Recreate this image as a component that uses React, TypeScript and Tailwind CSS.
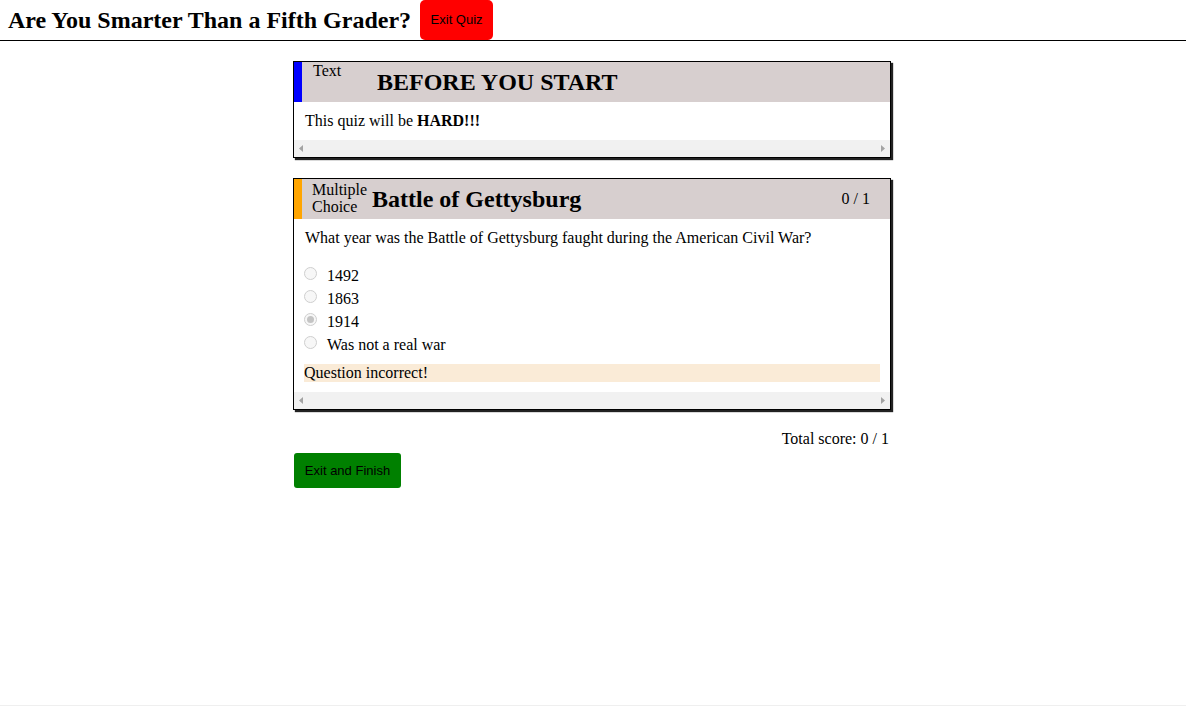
export default function App() {
  const serif = "font-['Liberation_Serif','Times_New_Roman',serif]";
  const sans = "font-['Liberation_Sans',Arial,sans-serif]";

  const options = ["1492", "1863", "1914", "Was not a real war"];
  const selected = "1914";

  function ScrollBar() {
    return (
      <div className="flex h-[17px] items-center justify-between bg-[#f1f1f1] px-[5px]">
        <svg width="4" height="7" viewBox="0 0 4 7">
          <path d="M4 0 L0 3.5 L4 7 Z" fill="#a3a3a3" />
        </svg>
        <svg width="4" height="7" viewBox="0 0 4 7">
          <path d="M0 0 L4 3.5 L0 7 Z" fill="#a3a3a3" />
        </svg>
      </div>
    );
  }

  return (
    <div className={`flex min-h-[706px] flex-col border-b border-[#efefef] bg-white text-black ${serif}`}>
      <header className="flex h-[41px] items-center border-b border-black">
        <h1 className="pl-2 text-2xl font-bold">Are You Smarter Than a Fifth Grader?</h1>
        <button className={`ml-[9px] h-10 w-[73px] self-start rounded-[5px] bg-[#ff0000] text-[13px] ${sans}`}>
          Exit Quiz
        </button>
      </header>

      <main className="mx-auto mt-5 w-[600px] pr-[2px]">
        <div className="border border-black shadow-[2px_2px_1px_#222]">
          <div className="flex h-10 bg-[#d7cfcf]">
            <div className="w-2 bg-[#0000ff]" />
            <span className="ml-[11px] w-[50px] text-base leading-[18px]">Text</span>
            <h2 className="ml-[14px] self-center text-2xl font-bold">BEFORE YOU START</h2>
          </div>
          <div className="py-[10px] pl-[11px] pr-[10px] text-base leading-[18px]">
            This quiz will be <b>HARD!!!</b>
          </div>
          <ScrollBar />
        </div>

        <div className="mt-5 border border-black shadow-[2px_2px_1px_#222]">
          <div className="flex h-10 items-center bg-[#d7cfcf]">
            <div className="h-full w-2 bg-[#ffa500]" />
            <span className="ml-[10px] w-[56px] -translate-y-[1px] text-base leading-[17px]">Multiple Choice</span>
            <h2 className="ml-[4px] text-2xl font-bold">Battle of Gettysburg</h2>
            <span className="ml-auto mr-5 text-base">0 / 1</span>
          </div>
          <div className="px-[10px] pb-[10px] pt-[10px] text-base leading-[18px]">
            <p className="pl-[1px]">What year was the Battle of Gettysburg faught during the American Civil War?</p>
            <div className="mt-[17px]">
              {options.map((o) => (
                <label key={o} className="flex h-[23px] items-center">
                  <span className="flex h-[13px] w-[13px] -translate-y-[2px] items-center justify-center rounded-full border border-[#cfcfcf] bg-[#f7f7f7]">
                    {o === selected && <span className="h-[7px] w-[7px] rounded-full bg-[#c4c4c4]" />}
                  </span>
                  <span className="ml-[10px]">{o}</span>
                </label>
              ))}
            </div>
            <div className="mt-[8px] h-[18px] bg-[#faebd7] leading-[18px]">Question incorrect!</div>
          </div>
          <ScrollBar />
        </div>

        <p className="mt-[20px] pr-[2px] text-right text-base leading-[18px]">Total score: 0 / 1</p>
        <button className={`ml-[1px] mt-[5px] h-[35px] w-[107px] rounded-[3px] bg-[#008000] text-[13px] ${sans}`}>
          Exit and Finish
        </button>
      </main>
    </div>
  );
}
